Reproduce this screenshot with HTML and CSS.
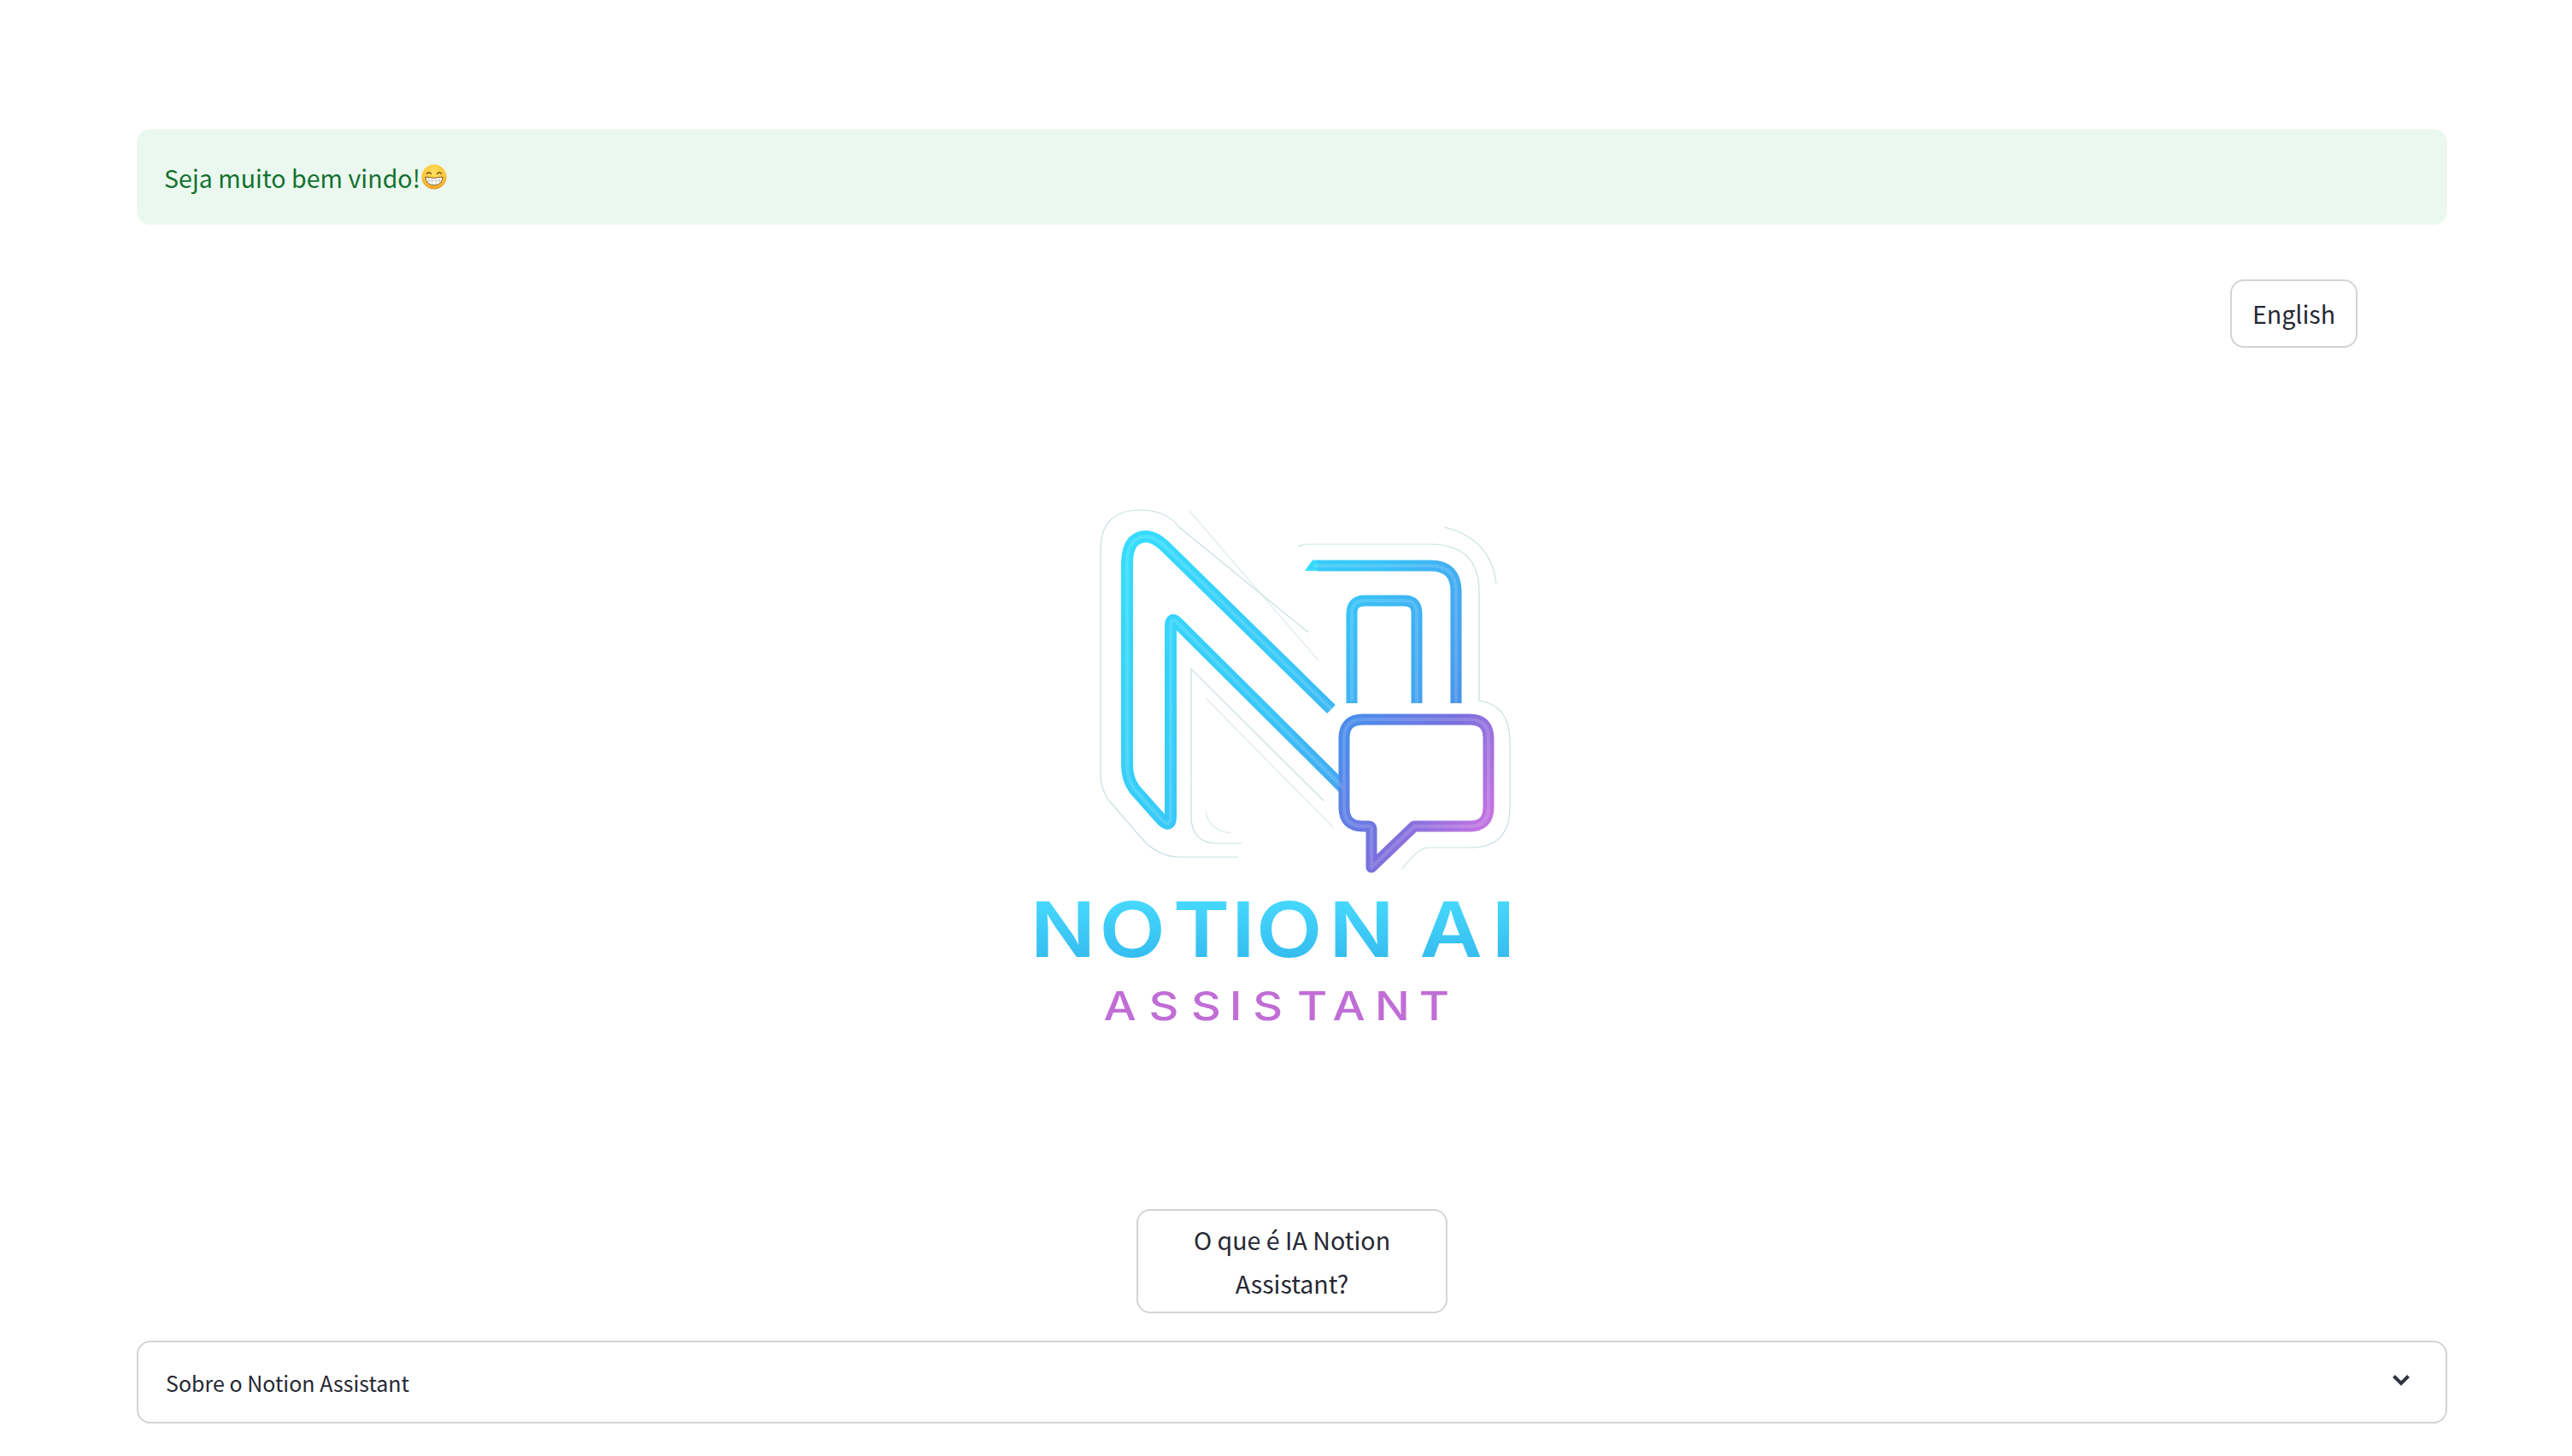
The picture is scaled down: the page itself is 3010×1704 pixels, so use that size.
FILE: index.html
```html
<!DOCTYPE html>
<html lang="pt">
<head>
<meta charset="utf-8">
<title>Notion AI Assistant</title>
<link rel="stylesheet" href="styles.css">
</head>
<body>
<main class="page">
  <div class="alert">
    <span>Seja muito bem vindo!</span><svg class="emoji" viewBox="0 0 30 30" aria-hidden="true">
      <defs><radialGradient id="face" cx="50%" cy="35%" r="65%"><stop offset="0" stop-color="#ffdf5e"/><stop offset=".7" stop-color="#fdc73c"/><stop offset="1" stop-color="#ee9a24"/></radialGradient></defs>
      <circle cx="15" cy="15" r="14.6" fill="url(#face)"/>
      <path d="M6.6 11.4q2.4-3.4 4.8 0M18.6 11.4q2.4-3.4 4.8 0" fill="none" stroke="#7a4a12" stroke-width="1.5" stroke-linecap="round"/>
      <path d="M4.8 15q10.2 2.6 20.4 0q-.6 9.6-10.2 9.8q-9.600-.2-10.200-9.800z" fill="#fff" stroke="#8a5a1a" stroke-width="1"/>
      <path d="M5.400 19.600h19.200M9 16.400v7M12.800 16.800v8M17.200 16.800v8M21 16.400v7" fill="none" stroke="#b9b9b9" stroke-width=".7"/>
    </svg>
  </div>
  <div class="lang-row"><button class="btn btn-lang">English</button></div>
  <svg class="logo" viewBox="0 0 664 640" role="img" aria-label="Notion AI Assistant">
    <defs>
      <linearGradient id="ng" gradientUnits="userSpaceOnUse" x1="140" y1="90" x2="530" y2="340">
        <stop offset="0" stop-color="#36dcfd"/><stop offset=".5" stop-color="#38c6f8"/><stop offset=".8" stop-color="#45a3f0"/><stop offset="1" stop-color="#4a7fe4"/>
      </linearGradient>
      <linearGradient id="bg" gradientUnits="userSpaceOnUse" x1="395" y1="300" x2="565" y2="400">
        <stop offset="0" stop-color="#4c8cec"/><stop offset=".5" stop-color="#7b70dd"/><stop offset="1" stop-color="#ca74e2"/>
      </linearGradient>
      <linearGradient id="tg" gradientUnits="userSpaceOnUse" x1="0" y1="485" x2="0" y2="550">
        <stop offset="0" stop-color="#46d8fd"/><stop offset="1" stop-color="#36bdf0"/>
      </linearGradient>
    </defs>
    <g class="faint">
      <path d="M269 433H200Q175 433 155 410L118 367Q108 354 108 335V73Q108 27 155 27Q185 27 200 47L351 170"/>
      <path class="fainter" d="M212 28L363 203"/>
      <path d="M339 70Q343 67 350 67H494Q551 67 551 123V250Q587 255 587 298V375Q587 422 540 422H490Q478 424 461 447"/>
      <path d="M510 47Q565 60 571 113"/>
      <path d="M273 417H245Q214 417 214 385V213L369 367"/>
      <path class="fainter" d="M231 247L380 398M231 380Q236 403 261 405"/>
    </g>
    <path d="M378 260L182 68Q162 50 146 64Q139 72 139 90V325Q139 342 148 354L180 390Q190 399 190 386V164Q190 150 199 160L392 352" class="line" stroke="url(#ng)" stroke-width="14"/>
    <polygon class="cap" points="347,98 364,98 364,85.500 356,85.500"/>
    <path d="M362 92H494Q524 92 524 122V253" class="line" stroke="url(#ng)" stroke-width="13"/>
    <path d="M402 253V148Q402 133 417 133H464Q478 133 478 148V253" class="line" stroke="url(#ng)" stroke-width="13"/>
    <path d="M415 272H540Q562 272 562 294V375Q562 397 540 397H475L425 445V400Q425 397 422 397H415Q393 397 393 375V294Q393 272 415 272Z" class="line" stroke="url(#bg)" stroke-width="13"/>
    <g class="shine">
      <path d="M378 260L182 68Q162 50 146 64Q139 72 139 90V325Q139 342 148 354L180 390Q190 399 190 386V164Q190 150 199 160L392 352"/>
      <path d="M358 92H494Q524 92 524 122V253"/>
      <path d="M402 250V148Q402 133 417 133H464Q478 133 478 148V253"/>
      <path d="M415 272H540Q562 272 562 294V375Q562 397 540 397H475L425 445V400Q425 397 422 397H415Q393 397 393 375V294Q393 272 415 272Z"/>
    </g>
    <text class="word-main" transform="scale(1.12 1)" y="550" fill="url(#tg)" x="23 95 172 233 259 335 410 430 505">NOTION AI</text>
    <text class="word-sub" transform="scale(1.15 1)" y="624" x="97 143 186 225 249 294 330 373 418">ASSISTANT</text>
  </svg>
  <div class="center-row"><button class="btn btn-what">O que é IA Notion Assistant?</button></div>
  <div class="expander">
    <span>Sobre o Notion Assistant</span>
    <svg class="chevron" viewBox="0 0 20 14" aria-hidden="true"><path d="M1.500 2.500L10 11L18.500 2.500"/></svg>
  </div>
</main>
</body>
</html>
```
FILE: styles.css
```css
html, body { margin: 0; background: #fff; }
body { font-family: "Noto Sans CJK JP", "Noto Sans", sans-serif; color: #262833; }
.page { display: flex; flex-direction: column; padding: 151px 146px 38px 160px; }
.alert {
  display: flex; align-items: center; height: 112px; box-sizing: border-box;
  padding-left: 32px; border-radius: 16px; background: #ebf8ef; color: #14702f;
  font-size: 28.6px;
}
.emoji { width: 30px; height: 30px; margin-left: 1px; }
.lang-row { display: flex; justify-content: flex-end; padding-right: 105px; margin-top: 64px; }
.btn {
  box-sizing: border-box; border: 2px solid #d4d4d7; border-radius: 16px; background: #fff;
  color: #262833; font: inherit; font-size: 28.6px; line-height: 51.2px;
}
.btn-lang { width: 149px; height: 80px; padding: 0; }
.logo { display: block; width: 664px; height: 640px; margin: 163px auto 0; overflow: visible; }
.faint { fill: none; stroke: #9fc6cd; stroke-width: 1.2; opacity: .55; }
.fainter { opacity: .6; }
.line { fill: none; stroke-linecap: butt; stroke-linejoin: round; }
.cap { fill: #38d9fd; }
.shine { fill: none; stroke: #fff; stroke-width: 4; opacity: .14; stroke-linejoin: round; }
.word-main { font-family: Inter, sans-serif; font-size: 90px; font-weight: 600; }
.word-sub { font-family: Inter, sans-serif; font-size: 47px; font-weight: 500; fill: #c06dd6; }
.center-row { display: flex; justify-content: center; margin-top: 205px; }
.btn-what { width: 364px; height: 122px; padding: 8px 40px; }
.expander {
  display: flex; align-items: center; justify-content: space-between; box-sizing: border-box;
  height: 97px; margin-top: 32px; padding: 0 42px 0 32px;
  border: 2px solid #d4d4d7; border-radius: 16px; font-size: 25px;
}
.chevron { width: 20px; height: 14px; margin-top: -6px; fill: none; stroke: #31333f; stroke-width: 4; }
```
